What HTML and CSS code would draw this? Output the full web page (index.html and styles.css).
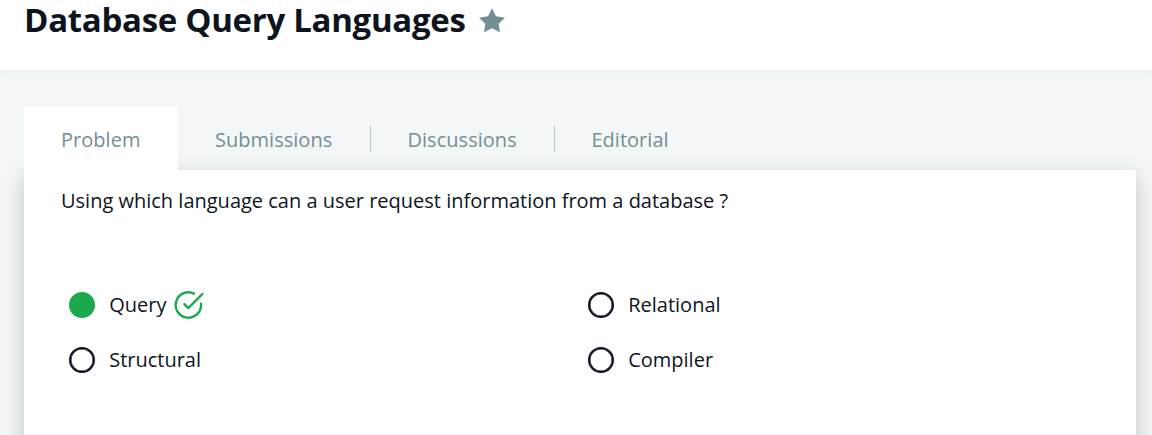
FILE: index.html
```html
<!DOCTYPE html>
<html lang="en">
<head>
<meta charset="utf-8">
<title>Database Query Languages</title>
<link rel="stylesheet" href="styles.css">
</head>
<body>
<header class="header">
  <h1 class="title">Database Query Languages</h1>
  <svg class="star" viewBox="0 0 26 26"><path d="M13 .3L16.900 8.300 26 9.800 19.600 15.800 21 24.200 13 20.300 5 24.200 6.400 15.800 0 9.800 9.100 8.300z"/></svg>
</header>
<main class="content">
  <nav class="tabs">
    <a class="tab tab-active">Problem</a>
    <a class="tab">Submissions</a>
    <a class="tab tab-divided">Discussions</a>
    <a class="tab tab-divided">Editorial</a>
  </nav>
  <section class="card">
    <p class="question">Using which language can a user request information from a database ?</p>
    <div class="options">
      <label class="option"><span class="radio radio-on"></span><span>Query</span><svg class="check" viewBox="0 0 30 30"><path d="M27 13.700A12.700 12.700 0 1 1 20 3.600"/><path d="M28.400 4L14.300 18.100 10.400 14.200"/></svg></label>
      <label class="option"><span class="radio"></span><span>Relational</span></label>
      <label class="option"><span class="radio"></span><span>Structural</span></label>
      <label class="option"><span class="radio"></span><span>Compiler</span></label>
    </div>
  </section>
</main>
</body>
</html>
```
FILE: styles.css
```css
* { box-sizing: border-box; }
body { margin: 0; height: 435px; overflow: hidden; background: #f3f7f7; color: #0e141e; font-family: "Open Sans", sans-serif; }
.header { display: flex; align-items: flex-start; height: 70px; padding: 0 24px; background: #fff; box-shadow: 0 1px 5px rgba(0, 0, 0, .05); }
.title { margin: 0 13px 0 0; font-size: 33px; line-height: 40px; font-weight: 700; letter-spacing: -.3px; white-space: nowrap; }
.star { width: 26px; height: 26px; margin-top: 8px; fill: #738f93; }
.content { height: 365px; padding: 37px 16px 0 24px; overflow: hidden; }
.tabs { position: relative; z-index: 1; display: flex; width: max-content; height: 63px; }
.tab { display: flex; align-items: center; padding: 2px 37.500px 0 37px; color: #738f93; font-size: 20px; letter-spacing: .03px; }
.tab-active { background: #fff; }
.tab-divided { padding: 2px 37px 0 36.700px; border-left: 1px solid; border-image: linear-gradient(transparent 19px, #b7c9cc 19px 45px, transparent 45px) 1; }
.card { height: 300px; padding: 15px 37px; background: #fff; box-shadow: 0 6px 20px rgba(0, 0, 0, .2); }
.question { margin: 0; font-size: 20px; line-height: 32px; }
.options { display: grid; grid-template-columns: 519px 519px; grid-auto-rows: 55px; margin-top: 60px; padding-left: 8px; }
.option { display: flex; align-items: center; font-size: 20px; }
.radio { width: 26px; height: 26px; margin-right: 14.200px; border: 2px solid #0e141e; border-radius: 50%; box-shadow: inset 0 0 0 .5px #0e141e; }
.radio-on { border-color: #1ba94c; background: #1ba94c; box-shadow: none; }
.check { width: 30px; height: 30px; margin-left: 7.200px; fill: none; stroke: #1ba94c; stroke-width: 2.400; stroke-linecap: round; stroke-linejoin: round; }
```
